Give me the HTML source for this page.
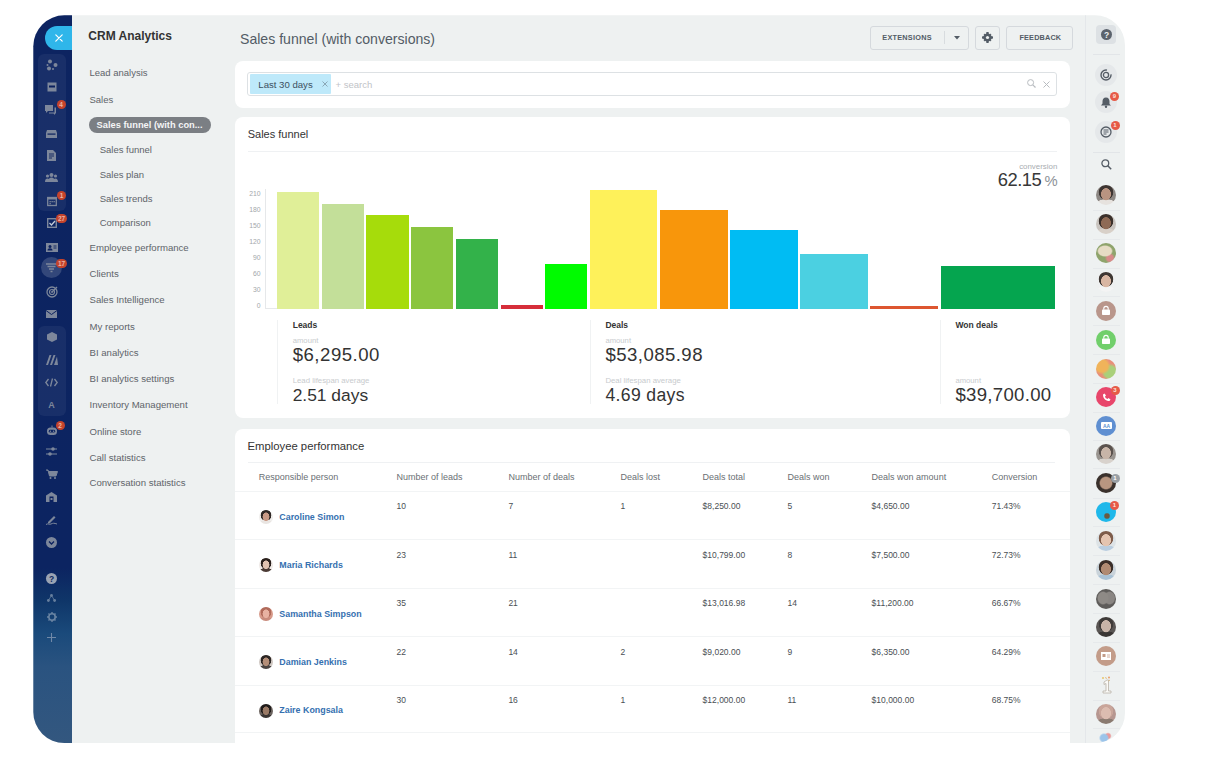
<!DOCTYPE html>
<html><head><meta charset="utf-8"><style>
*{box-sizing:border-box;margin:0;padding:0}
html,body{width:1216px;height:780px;overflow:hidden;background:#fff;font-family:"Liberation Sans",sans-serif;color:#333}
.abs{position:absolute}
.t{position:absolute;white-space:nowrap;line-height:1}
#frame{position:absolute;left:0;top:0;width:1216px;height:780px;clip-path:inset(15.3px 91px 37px 33.3px round 31px 30px 30px 31px);background:#eef1f1}
svg{position:absolute;overflow:visible}
</style></head><body>
<div id="frame">
<div class="abs" style="left:33px;top:15px;width:39.00px;height:728.00px;background:linear-gradient(180deg,#0d2461 0%,#0c2461 76%,#0f3669 80.5%,#1a4a7b 85%,#2a5380 89.5%,#33577f 100%)"></div>
<div class="abs" style="left:45px;top:25.5px;width:27.00px;height:24.20px;background:#2fb6ea;border-radius:12px 0 0 12px"></div>
<svg style="left:54.5px;top:34px" width="8" height="8" viewBox="0 0 8 8"><path d="M0.8 0.8L7.2 7.2M7.2 0.8L0.8 7.2" stroke="#fff" stroke-width="1.2" stroke-linecap="round"/></svg>
<div class="abs" style="left:37.5px;top:54px;width:28.50px;height:157.00px;background:rgba(255,255,255,0.05);border-radius:6px"></div>
<div class="abs" style="left:37.5px;top:326px;width:28.50px;height:90.00px;background:rgba(255,255,255,0.05);border-radius:6px"></div>
<div class="abs" style="left:41px;top:257px;width:21px;height:21px;border-radius:50%;background:rgba(255,255,255,0.16)"></div>
<svg style="left:45.5px;top:59.4px" width="12" height="12" viewBox="0 0 12 12"><g fill="#7d879b"><circle cx="4" cy="2.5" r="2"/><circle cx="9.5" cy="6" r="2"/><circle cx="3" cy="9.5" r="2"/><circle cx="7" cy="10" r="1"/><circle cx="1.5" cy="6" r="1"/></g></svg>
<svg style="left:46.5px;top:82.3px" width="10" height="10" viewBox="0 0 10 10"><rect x="0.5" y="0.5" width="9" height="9" fill="#7d879b"/><rect x="2" y="3.5" width="6" height="2" fill="#0b215f"/></svg>
<svg style="left:45.0px;top:104.2px" width="12" height="11" viewBox="0 0 12 11"><path d="M0 1h8v6H3l-2 2V7H0z" fill="#7d879b"/><path d="M9.5 3.5H11v6H10v1.5L8.5 9.5H4V8.5h5.5z" fill="#7d879b"/></svg>
<svg style="left:46.0px;top:129.5px" width="11" height="8" viewBox="0 0 11 8"><path d="M1 0h9l1 3v5H0V3z" fill="#7d879b"/><rect x="1.5" y="3.5" width="8" height="1.2" fill="#0b215f"/></svg>
<svg style="left:47.0px;top:149.9px" width="9" height="11" viewBox="0 0 9 11"><path d="M0 0h6l3 3v8H0z" fill="#7d879b"/><path d="M2 4h5M2 6h5M2 8h3" stroke="#0b215f" stroke-width="0.9"/></svg>
<svg style="left:45.0px;top:172.8px" width="13" height="9" viewBox="0 0 13 9"><g fill="#7d879b"><circle cx="6.5" cy="2" r="2"/><circle cx="2.5" cy="3" r="1.6"/><circle cx="10.5" cy="3" r="1.6"/><path d="M3 9c0-3 1.5-4.5 3.5-4.5S10 6 10 9z"/><path d="M0 9c0-2.5 1-3.5 2.5-3.5S5 7 5 9zM8 9c0-2 1-3.5 2.5-3.5S13 7 13 9z"/></g></svg>
<svg style="left:46.5px;top:195.8px" width="10" height="10" viewBox="0 0 10 10"><rect x="0.7" y="1.5" width="8.6" height="8" fill="none" stroke="#7d879b" stroke-width="1.3"/><rect x="0.5" y="1" width="9" height="2.5" fill="#7d879b"/><g fill="#7d879b"><rect x="2.5" y="5" width="1.3" height="1.3"/><rect x="4.5" y="5" width="1.3" height="1.3"/><rect x="6.5" y="5" width="1.3" height="1.3"/><rect x="2.5" y="7" width="1.3" height="1.3"/></g></svg>
<svg style="left:46.5px;top:217.7px" width="10" height="10" viewBox="0 0 10 10"><rect x="0.7" y="0.7" width="8.6" height="8.6" fill="none" stroke="#7d879b" stroke-width="1.4"/><path d="M2.5 5l2 2 3.5-4" fill="none" stroke="#c3cbd8" stroke-width="1.3"/></svg>
<svg style="left:45.5px;top:242.5px" width="12" height="9" viewBox="0 0 12 9"><rect x="0" y="0" width="12" height="9" fill="#7d879b"/><circle cx="4" cy="3.5" r="1.5" fill="#0b215f"/><path d="M1.5 7.5c0-1.5 1-2.2 2.5-2.2s2.5.7 2.5 2.2z" fill="#0b215f"/><path d="M7.5 3h3M7.5 5h3" stroke="#0b215f" stroke-width="0.9"/></svg>
<svg style="left:46.0px;top:263.0px" width="11" height="10" viewBox="0 0 11 10"><path d="M0 1h11M1.5 3.5h8M3 6h5M4.5 8.5h2" stroke="#7d879b" stroke-width="1.5"/></svg>
<svg style="left:45.5px;top:286.0px" width="12" height="12" viewBox="0 0 12 12"><circle cx="6" cy="6" r="5" fill="none" stroke="#7d879b" stroke-width="1.3"/><circle cx="6" cy="6" r="2.5" fill="none" stroke="#7d879b" stroke-width="1.2"/><circle cx="6" cy="6" r="0.9" fill="#7d879b"/><path d="M6 6L11 1" stroke="#7d879b" stroke-width="1.2"/></svg>
<svg style="left:46.0px;top:309.9px" width="11" height="8" viewBox="0 0 11 8"><path d="M0 0h11v8H0z" fill="#7d879b"/><path d="M0 0.5L5.5 4.5 11 0.5" fill="none" stroke="#0b215f" stroke-width="1"/></svg>
<svg style="left:46.5px;top:332.0px" width="10" height="10" viewBox="0 0 10 10"><path d="M5 0l5 2.5v5L5 10 0 7.5v-5z" fill="#7d879b"/></svg>
<svg style="left:45.5px;top:355.4px" width="12" height="10" viewBox="0 0 12 10"><path d="M0 10L3.5 0h2L2 10zM4 10L7.5 0h2L6 10zM8 10l3-8.5L12 10z" fill="#7d879b"/></svg>
<svg style="left:45.0px;top:377.8px" width="13" height="9" viewBox="0 0 13 9"><path d="M3.5 1L0.8 4.5 3.5 8M9.5 1l2.7 3.5L9.5 8M7.5 0.5L5.5 8.5" fill="none" stroke="#7d879b" stroke-width="1.3"/></svg>
<div class="t" style="left:48.30px;top:401.38px;font-size:9px;color:#7d879b;font-weight:bold;">A</div>
<svg style="left:45.5px;top:424.6px" width="12" height="10" viewBox="0 0 12 10"><rect x="1" y="2.5" width="10" height="7.5" rx="3.5" fill="#7d879b"/><rect x="2.8" y="4.8" width="6.4" height="2.8" rx="1.4" fill="#0c2461"/><circle cx="4.4" cy="6.2" r="0.7" fill="#7d879b"/><circle cx="7.6" cy="6.2" r="0.7" fill="#7d879b"/><path d="M6 0.5v2" stroke="#7d879b" stroke-width="1"/></svg>
<svg style="left:46.0px;top:447.0px" width="11" height="9" viewBox="0 0 11 9"><path d="M0 2h11M0 7h11" stroke="#7d879b" stroke-width="1.2"/><circle cx="7" cy="2" r="1.8" fill="#7d879b"/><circle cx="4" cy="7" r="1.8" fill="#7d879b"/></svg>
<svg style="left:45.5px;top:468.5px" width="12" height="10" viewBox="0 0 12 10"><path d="M0 1h2l1.5 6h6.5l1.5-4.5H3" fill="#7d879b" stroke="#7d879b" stroke-width="1"/><circle cx="4.5" cy="9" r="1" fill="#7d879b"/><circle cx="9" cy="9" r="1" fill="#7d879b"/></svg>
<svg style="left:46.0px;top:492.0px" width="11" height="10" viewBox="0 0 11 10"><path d="M0 3.5L5.5 0 11 3.5V10H0z" fill="#7d879b"/><rect x="3.5" y="4.5" width="4" height="5.5" fill="#0b215f"/><rect x="4.5" y="6" width="2" height="2" fill="#7d879b"/></svg>
<svg style="left:45.5px;top:515.4px" width="12" height="10" viewBox="0 0 12 10"><path d="M2 7L8 1l1.5 1.5-6 6H2z" fill="#7d879b"/><path d="M0 9.5c2-1.5 3 .5 5-.5s3-1 6 0" fill="none" stroke="#7d879b" stroke-width="1"/></svg>
<svg style="left:46.0px;top:536.8px" width="11" height="11" viewBox="0 0 11 11"><circle cx="5.5" cy="5.5" r="5.5" fill="#7d879b"/><path d="M3 4.5l2.5 2.5L8 4.5" fill="none" stroke="#0b215f" stroke-width="1.3"/></svg>
<svg style="left:46.0px;top:572.5px" width="11" height="11" viewBox="0 0 11 11"><circle cx="5.5" cy="5.5" r="5.5" fill="#9aa3b3"/><text x="5.5" y="8.6" font-size="8.5" font-weight="bold" text-anchor="middle" fill="#0d2a5e" font-family="Liberation Sans">?</text></svg>
<svg style="left:47.0px;top:593.7px" width="9" height="8" viewBox="0 0 9 8"><g fill="#667f9e"><circle cx="4.5" cy="1.5" r="1.4"/><circle cx="1.4" cy="6.5" r="1.4"/><circle cx="7.6" cy="6.5" r="1.4"/></g><path d="M4.5 1.5L1.4 6.5M4.5 1.5L7.6 6.5" stroke="#667f9e" stroke-width="0.8"/></svg>
<svg style="left:46.5px;top:612.3px" width="10" height="10" viewBox="0 0 10 10"><circle cx="5" cy="5" r="3.2" fill="none" stroke="#6a84a3" stroke-width="1.6"/><path d="M5 0v2M5 8v2M0 5h2M8 5h2M1.5 1.5l1.4 1.4M7.1 7.1l1.4 1.4M1.5 8.5l1.4-1.4M7.1 2.9l1.4-1.4" stroke="#6a84a3" stroke-width="1.4"/></svg>
<svg style="left:47.0px;top:632.5px" width="9" height="9" viewBox="0 0 9 9"><path d="M4.5 0v9M0 4.5h9" stroke="#7089a8" stroke-width="1.1"/></svg>
<div class="abs" style="left:56.5px;top:100.1px;width:9px;height:9px;border-radius:4.5px;background:#c4432c;color:#eab5a5;font-size:6.5px;line-height:9px;text-align:center;font-weight:bold">4</div>
<div class="abs" style="left:57.0px;top:191.3px;width:9px;height:9px;border-radius:4.5px;background:#c4432c;color:#eab5a5;font-size:6.5px;line-height:9px;text-align:center;font-weight:bold">1</div>
<div class="abs" style="left:56.0px;top:213.5px;width:11px;height:9px;border-radius:4.5px;background:#c4432c;color:#eab5a5;font-size:6.5px;line-height:9px;text-align:center;font-weight:bold">27</div>
<div class="abs" style="left:56.0px;top:259.0px;width:11px;height:9px;border-radius:4.5px;background:#c4432c;color:#eab5a5;font-size:6.5px;line-height:9px;text-align:center;font-weight:bold">17</div>
<div class="abs" style="left:55.5px;top:420.5px;width:9px;height:9px;border-radius:4.5px;background:#c4432c;color:#eab5a5;font-size:6.5px;line-height:9px;text-align:center;font-weight:bold">2</div>
<div class="t" style="left:88.30px;top:30.34px;font-size:12px;color:#333;font-weight:bold;">CRM Analytics</div>
<div class="t" style="left:89.50px;top:68.16px;font-size:9.5px;color:#5e646a;font-weight:normal;">Lead analysis</div>
<div class="t" style="left:89.50px;top:94.76px;font-size:9.5px;color:#5e646a;font-weight:normal;">Sales</div>
<div class="abs" style="left:89px;top:117.4px;width:121.50px;height:15.70px;background:#7b7f84;border-radius:8px"></div>
<div class="t" style="left:96.60px;top:120.93px;font-size:9.3px;color:#f4f5f6;font-weight:bold;">Sales funnel (with con...</div>
<div class="t" style="left:99.70px;top:145.06px;font-size:9.5px;color:#5e646a;font-weight:normal;">Sales funnel</div>
<div class="t" style="left:99.70px;top:169.66px;font-size:9.5px;color:#5e646a;font-weight:normal;">Sales plan</div>
<div class="t" style="left:99.70px;top:193.96px;font-size:9.5px;color:#5e646a;font-weight:normal;">Sales trends</div>
<div class="t" style="left:99.70px;top:218.46px;font-size:9.5px;color:#5e646a;font-weight:normal;">Comparison</div>
<div class="t" style="left:89.50px;top:242.67px;font-size:9.6px;color:#5e646a;font-weight:normal;">Employee performance</div>
<div class="t" style="left:89.50px;top:268.97px;font-size:9.6px;color:#5e646a;font-weight:normal;">Clients</div>
<div class="t" style="left:89.50px;top:295.27px;font-size:9.6px;color:#5e646a;font-weight:normal;">Sales Intelligence</div>
<div class="t" style="left:89.50px;top:321.57px;font-size:9.6px;color:#5e646a;font-weight:normal;">My reports</div>
<div class="t" style="left:89.50px;top:347.87px;font-size:9.6px;color:#5e646a;font-weight:normal;">BI analytics</div>
<div class="t" style="left:89.50px;top:374.17px;font-size:9.6px;color:#5e646a;font-weight:normal;">BI analytics settings</div>
<div class="t" style="left:89.50px;top:400.47px;font-size:9.6px;color:#5e646a;font-weight:normal;">Inventory Management</div>
<div class="t" style="left:89.50px;top:426.77px;font-size:9.6px;color:#5e646a;font-weight:normal;">Online store</div>
<div class="t" style="left:89.50px;top:453.07px;font-size:9.6px;color:#5e646a;font-weight:normal;">Call statistics</div>
<div class="t" style="left:89.50px;top:477.87px;font-size:9.6px;color:#5e646a;font-weight:normal;">Conversation statistics</div>
<div class="t" style="left:240.00px;top:32.06px;font-size:14.1px;color:#535c66;font-weight:normal;">Sales funnel (with conversions)</div>
<div class="abs" style="left:869.5px;top:25.8px;width:99.30px;height:23.80px;border:1px solid #d5d9dd;border-radius:3px;background:#eef1f1"></div>
<div class="abs" style="left:944.3px;top:31px;width:1.00px;height:13.00px;background:#d8dcdf"></div>
<div class="t" style="left:882.30px;top:34.42px;font-size:7.3px;color:#535c66;font-weight:bold;letter-spacing:0.25px">EXTENSIONS</div>
<svg style="left:953.5px;top:35.5px" width="6" height="4" viewBox="0 0 6 4"><path d="M0 0h6L3 3.5z" fill="#535c66"/></svg>
<div class="abs" style="left:975.4px;top:25.8px;width:24.20px;height:23.80px;border:1px solid #d5d9dd;border-radius:3px;background:#eef1f1"></div>
<svg style="left:982.0px;top:32.2px" width="11" height="11" viewBox="0 0 11 11"><g fill="#535c66"><circle cx="5.5" cy="5.5" r="3.8"/><path d="M4.4 0h2.2l.3 2h-2.8zM4.4 11h2.2l.3-2h-2.8zM0 4.4v2.2l2 .3V4.1zM11 4.4v2.2l-2 .3V4.1z"/><path d="M1.4 2.9L2.9 1.4 4.3 2.9 2.9 4.3zM9.6 8.1L8.1 9.6 6.7 8.1 8.1 6.7zM8.1 1.4L9.6 2.9 8.1 4.3 6.7 2.9zM2.9 9.6L1.4 8.1 2.9 6.7 4.3 8.1z"/></g><circle cx="5.5" cy="5.5" r="1.6" fill="#eef1f1"/></svg>
<div class="abs" style="left:1006.2px;top:25.8px;width:66.60px;height:23.80px;border:1px solid #d5d9dd;border-radius:3px;background:#eef1f1"></div>
<div class="t" style="left:1019.50px;top:34.42px;font-size:7.3px;color:#535c66;font-weight:bold;letter-spacing:0.15px">FEEDBACK</div>
<div class="abs" style="left:234.7px;top:60.7px;width:834.90px;height:47.30px;background:#fff;border-radius:8px"></div>
<div class="abs" style="left:246.8px;top:72.2px;width:810.70px;height:24.10px;border:1px solid #dde1e4;border-radius:3px;background:#fff"></div>
<div class="abs" style="left:249.9px;top:74.4px;width:81.60px;height:19.50px;background:#bee9fa;border-radius:1px"></div>
<div class="t" style="left:258.30px;top:79.57px;font-size:9.6px;color:#3d5061;font-weight:normal;">Last 30 days</div>
<svg style="left:322.1px;top:81.0px" width="6" height="6" viewBox="0 0 6 6"><path d="M0.5 0.5l5 5M5.5 0.5l-5 5" stroke="#8aa7b6" stroke-width="1"/></svg>
<div class="t" style="left:335.60px;top:79.66px;font-size:9.5px;color:#bfc3c7;font-weight:normal;">+ search</div>
<svg style="left:1027.0px;top:79.0px" width="9" height="9" viewBox="0 0 9 9"><circle cx="3.6" cy="3.6" r="3" fill="none" stroke="#b8bcc0" stroke-width="1"/><path d="M5.8 5.8L8.5 8.5" stroke="#b8bcc0" stroke-width="1.2"/></svg>
<svg style="left:1043.0px;top:80.5px" width="7" height="7" viewBox="0 0 7 7"><path d="M0.5 0.5l6 6M6.5 0.5l-6 6" stroke="#b8bcc0" stroke-width="1"/></svg>
<div class="abs" style="left:234.7px;top:117px;width:834.90px;height:300.50px;background:#fff;border-radius:8px"></div>
<div class="t" style="left:247.70px;top:129.49px;font-size:11px;color:#333;font-weight:normal;">Sales funnel</div>
<div class="abs" style="left:248px;top:151px;width:809.00px;height:1.00px;background:#eff1f3"></div>
<div class="t" style="right:158.70px;top:162.91px;font-size:7.9px;color:#a9adb1;font-weight:normal;">conversion</div>
<div class="t" style="right:174.80px;top:171.02px;font-size:18.4px;color:#383838;font-weight:normal;letter-spacing:-0.5px">62.15</div>
<div class="t" style="right:158.40px;top:174.07px;font-size:14.8px;color:#8d9297;font-weight:normal;">%</div>
<div class="t" style="right:955.50px;top:191.04px;font-size:6.8px;color:#a3a7ab;font-weight:normal;">210</div>
<div class="t" style="right:955.50px;top:207.04px;font-size:6.8px;color:#a3a7ab;font-weight:normal;">180</div>
<div class="t" style="right:955.50px;top:223.04px;font-size:6.8px;color:#a3a7ab;font-weight:normal;">150</div>
<div class="t" style="right:955.50px;top:239.04px;font-size:6.8px;color:#a3a7ab;font-weight:normal;">120</div>
<div class="t" style="right:955.50px;top:255.04px;font-size:6.8px;color:#a3a7ab;font-weight:normal;">90</div>
<div class="t" style="right:955.50px;top:271.04px;font-size:6.8px;color:#a3a7ab;font-weight:normal;">60</div>
<div class="t" style="right:955.50px;top:287.04px;font-size:6.8px;color:#a3a7ab;font-weight:normal;">30</div>
<div class="t" style="right:955.50px;top:303.04px;font-size:6.8px;color:#a3a7ab;font-weight:normal;">0</div>
<div class="abs" style="left:265.3px;top:188.7px;width:1.00px;height:120.30px;background:#e6e8ea"></div>
<div class="abs" style="left:265.3px;top:308.2px;width:11.70px;height:0.80px;background:#e6e8ea"></div>
<div class="abs" style="left:277px;top:191.5px;width:42.40px;height:117.20px;background:#e0ef98"></div>
<div class="abs" style="left:322.3px;top:204px;width:41.70px;height:104.70px;background:#c3df99"></div>
<div class="abs" style="left:366.4px;top:215px;width:42.20px;height:93.70px;background:#a6dc0b"></div>
<div class="abs" style="left:411.4px;top:227px;width:41.80px;height:81.70px;background:#8bc53f"></div>
<div class="abs" style="left:456.2px;top:238.8px;width:41.80px;height:69.90px;background:#33b24a"></div>
<div class="abs" style="left:500.8px;top:305px;width:41.80px;height:3.70px;background:#d62e3a"></div>
<div class="abs" style="left:545.2px;top:263.7px;width:42.20px;height:45.00px;background:#00fb00"></div>
<div class="abs" style="left:590.4px;top:189.9px;width:67.10px;height:118.80px;background:#fef15a"></div>
<div class="abs" style="left:660.3px;top:209.6px;width:67.30px;height:99.10px;background:#f8960b"></div>
<div class="abs" style="left:729.9px;top:230.3px;width:67.70px;height:78.40px;background:#00bcf3"></div>
<div class="abs" style="left:800.4px;top:254.4px;width:67.30px;height:54.30px;background:#4bd0e1"></div>
<div class="abs" style="left:870.2px;top:305.9px;width:67.60px;height:2.80px;background:#dd5630"></div>
<div class="abs" style="left:940.7px;top:266.2px;width:114.50px;height:42.50px;background:#05a54f"></div>
<div class="abs" style="left:277.4px;top:320px;width:1.00px;height:84.00px;background:#f0f2f3"></div>
<div class="abs" style="left:590.2px;top:320px;width:1.00px;height:84.00px;background:#f0f2f3"></div>
<div class="abs" style="left:940px;top:320px;width:1.00px;height:84.00px;background:#f0f2f3"></div>
<div class="t" style="left:292.70px;top:321.10px;font-size:8.5px;color:#333;font-weight:bold;">Leads</div>
<div class="t" style="left:292.70px;top:336.88px;font-size:7.7px;color:#c8cbce;font-weight:normal;">amount</div>
<div class="t" style="left:292.70px;top:345.76px;font-size:18.6px;color:#333;font-weight:normal;letter-spacing:0.5px">$6,295.00</div>
<div class="t" style="left:292.70px;top:377.00px;font-size:7.8px;color:#c8cbce;font-weight:normal;">Lead lifespan average</div>
<div class="t" style="left:292.70px;top:387.07px;font-size:17.4px;color:#333;font-weight:normal;">2.51 days</div>
<div class="t" style="left:605.40px;top:321.00px;font-size:8.5px;color:#333;font-weight:bold;">Deals</div>
<div class="t" style="left:605.40px;top:336.88px;font-size:7.7px;color:#c8cbce;font-weight:normal;">amount</div>
<div class="t" style="left:605.40px;top:345.86px;font-size:18.6px;color:#333;font-weight:normal;letter-spacing:0.45px">$53,085.98</div>
<div class="t" style="left:605.40px;top:377.20px;font-size:7.8px;color:#c8cbce;font-weight:normal;">Deal lifespan average</div>
<div class="t" style="left:605.40px;top:387.10px;font-size:17.6px;color:#333;font-weight:normal;letter-spacing:0.35px">4.69 days</div>
<div class="t" style="left:955.40px;top:321.40px;font-size:8.5px;color:#333;font-weight:bold;">Won deals</div>
<div class="t" style="left:955.40px;top:376.98px;font-size:7.7px;color:#c8cbce;font-weight:normal;">amount</div>
<div class="t" style="left:955.40px;top:385.86px;font-size:18.6px;color:#333;font-weight:normal;letter-spacing:0.3px">$39,700.00</div>
<div class="abs" style="left:234.7px;top:429px;width:834.90px;height:331.00px;background:#fff;border-radius:8px"></div>
<div class="t" style="left:247.50px;top:441.03px;font-size:11.3px;color:#333;font-weight:normal;">Employee performance</div>
<div class="abs" style="left:247.5px;top:462px;width:807.50px;height:1.00px;background:#eff1f3"></div>
<div class="t" style="left:258.80px;top:472.78px;font-size:9px;color:#6a6f74;font-weight:normal;">Responsible person</div>
<div class="t" style="left:396.50px;top:472.78px;font-size:9px;color:#6a6f74;font-weight:normal;">Number of leads</div>
<div class="t" style="left:508.40px;top:472.78px;font-size:9px;color:#6a6f74;font-weight:normal;">Number of deals</div>
<div class="t" style="left:620.50px;top:472.78px;font-size:9px;color:#6a6f74;font-weight:normal;">Deals lost</div>
<div class="t" style="left:702.60px;top:472.78px;font-size:9px;color:#6a6f74;font-weight:normal;">Deals total</div>
<div class="t" style="left:787.50px;top:472.78px;font-size:9px;color:#6a6f74;font-weight:normal;">Deals won</div>
<div class="t" style="left:871.60px;top:472.78px;font-size:9px;color:#6a6f74;font-weight:normal;">Deals won amount</div>
<div class="t" style="left:991.80px;top:472.78px;font-size:9px;color:#6a6f74;font-weight:normal;">Conversion</div>
<div class="abs" style="left:235px;top:491.3px;width:834.60px;height:1.00px;background:#f2f4f5"></div>
<div class="abs" style="left:235px;top:539.3px;width:834.60px;height:1.00px;background:#f2f4f5"></div>
<div class="abs" style="left:235px;top:587.7px;width:834.60px;height:1.00px;background:#f2f4f5"></div>
<div class="abs" style="left:235px;top:636px;width:834.60px;height:1.00px;background:#f2f4f5"></div>
<div class="abs" style="left:235px;top:684.5px;width:834.60px;height:1.00px;background:#f2f4f5"></div>
<div class="abs" style="left:235px;top:732px;width:834.60px;height:1.00px;background:#f2f4f5"></div>
<div class="abs" style="left:259.4px;top:510.0px;width:14px;height:14px;border-radius:50%;background:radial-gradient(ellipse 26% 32% at 50% 48%,#c99a86 0 90%,transparent 100%),radial-gradient(ellipse 55% 30% at 50% 100%,#e9e5e2 0 90%,transparent 100%),radial-gradient(ellipse 40% 42% at 50% 38%,#2f2826 0 90%,transparent 100%),#f0eeec"></div>
<div class="t" style="left:279.30px;top:512.77px;font-size:8.9px;color:#3570b0;font-weight:bold;">Caroline Simon</div>
<div class="t" style="left:396.50px;top:502.40px;font-size:8.5px;color:#4a4f54;font-weight:normal;">10</div>
<div class="t" style="left:508.40px;top:502.40px;font-size:8.5px;color:#4a4f54;font-weight:normal;">7</div>
<div class="t" style="left:620.50px;top:502.40px;font-size:8.5px;color:#4a4f54;font-weight:normal;">1</div>
<div class="t" style="left:702.60px;top:502.40px;font-size:8.5px;color:#4a4f54;font-weight:normal;">$8,250.00</div>
<div class="t" style="left:787.50px;top:502.40px;font-size:8.5px;color:#4a4f54;font-weight:normal;">5</div>
<div class="t" style="left:871.60px;top:502.40px;font-size:8.5px;color:#4a4f54;font-weight:normal;">$4,650.00</div>
<div class="t" style="left:991.80px;top:502.40px;font-size:8.5px;color:#4a4f54;font-weight:normal;">71.43%</div>
<div class="abs" style="left:259.4px;top:558.4px;width:14px;height:14px;border-radius:50%;background:radial-gradient(ellipse 26% 32% at 50% 48%,#e2c2b0 0 90%,transparent 100%),radial-gradient(ellipse 55% 30% at 50% 100%,#4a3a34 0 90%,transparent 100%),radial-gradient(ellipse 40% 42% at 50% 38%,#2a201c 0 90%,transparent 100%),#efe9e6"></div>
<div class="t" style="left:279.30px;top:561.17px;font-size:8.9px;color:#3570b0;font-weight:bold;">Maria Richards</div>
<div class="t" style="left:396.50px;top:550.80px;font-size:8.5px;color:#4a4f54;font-weight:normal;">23</div>
<div class="t" style="left:508.40px;top:550.80px;font-size:8.5px;color:#4a4f54;font-weight:normal;">11</div>
<div class="t" style="left:620.50px;top:550.80px;font-size:8.5px;color:#4a4f54;font-weight:normal;"></div>
<div class="t" style="left:702.60px;top:550.80px;font-size:8.5px;color:#4a4f54;font-weight:normal;">$10,799.00</div>
<div class="t" style="left:787.50px;top:550.80px;font-size:8.5px;color:#4a4f54;font-weight:normal;">8</div>
<div class="t" style="left:871.60px;top:550.80px;font-size:8.5px;color:#4a4f54;font-weight:normal;">$7,500.00</div>
<div class="t" style="left:991.80px;top:550.80px;font-size:8.5px;color:#4a4f54;font-weight:normal;">72.73%</div>
<div class="abs" style="left:259.4px;top:606.8px;width:14px;height:14px;border-radius:50%;background:radial-gradient(ellipse 26% 32% at 50% 48%,#e8b2a2 0 90%,transparent 100%),radial-gradient(ellipse 55% 30% at 50% 100%,#c98b7c 0 90%,transparent 100%),radial-gradient(ellipse 40% 42% at 50% 38%,#b06a5a 0 90%,transparent 100%),#d79a8a"></div>
<div class="t" style="left:279.30px;top:609.57px;font-size:8.9px;color:#3570b0;font-weight:bold;">Samantha Simpson</div>
<div class="t" style="left:396.50px;top:599.20px;font-size:8.5px;color:#4a4f54;font-weight:normal;">35</div>
<div class="t" style="left:508.40px;top:599.20px;font-size:8.5px;color:#4a4f54;font-weight:normal;">21</div>
<div class="t" style="left:620.50px;top:599.20px;font-size:8.5px;color:#4a4f54;font-weight:normal;"></div>
<div class="t" style="left:702.60px;top:599.20px;font-size:8.5px;color:#4a4f54;font-weight:normal;">$13,016.98</div>
<div class="t" style="left:787.50px;top:599.20px;font-size:8.5px;color:#4a4f54;font-weight:normal;">14</div>
<div class="t" style="left:871.60px;top:599.20px;font-size:8.5px;color:#4a4f54;font-weight:normal;">$11,200.00</div>
<div class="t" style="left:991.80px;top:599.20px;font-size:8.5px;color:#4a4f54;font-weight:normal;">66.67%</div>
<div class="abs" style="left:259.4px;top:655.2px;width:14px;height:14px;border-radius:50%;background:radial-gradient(ellipse 26% 32% at 50% 48%,#b48e78 0 90%,transparent 100%),radial-gradient(ellipse 55% 30% at 50% 100%,#4a4442 0 90%,transparent 100%),radial-gradient(ellipse 40% 42% at 50% 38%,#2c2624 0 90%,transparent 100%),#cfc7c2"></div>
<div class="t" style="left:279.30px;top:657.97px;font-size:8.9px;color:#3570b0;font-weight:bold;">Damian Jenkins</div>
<div class="t" style="left:396.50px;top:647.60px;font-size:8.5px;color:#4a4f54;font-weight:normal;">22</div>
<div class="t" style="left:508.40px;top:647.60px;font-size:8.5px;color:#4a4f54;font-weight:normal;">14</div>
<div class="t" style="left:620.50px;top:647.60px;font-size:8.5px;color:#4a4f54;font-weight:normal;">2</div>
<div class="t" style="left:702.60px;top:647.60px;font-size:8.5px;color:#4a4f54;font-weight:normal;">$9,020.00</div>
<div class="t" style="left:787.50px;top:647.60px;font-size:8.5px;color:#4a4f54;font-weight:normal;">9</div>
<div class="t" style="left:871.60px;top:647.60px;font-size:8.5px;color:#4a4f54;font-weight:normal;">$6,350.00</div>
<div class="t" style="left:991.80px;top:647.60px;font-size:8.5px;color:#4a4f54;font-weight:normal;">64.29%</div>
<div class="abs" style="left:259.4px;top:703.6px;width:14px;height:14px;border-radius:50%;background:radial-gradient(ellipse 26% 32% at 50% 48%,#9a7a66 0 90%,transparent 100%),radial-gradient(ellipse 55% 30% at 50% 100%,#3a3432 0 90%,transparent 100%),radial-gradient(ellipse 40% 42% at 50% 38%,#1f1b1a 0 90%,transparent 100%),#6a625e"></div>
<div class="t" style="left:279.30px;top:706.37px;font-size:8.9px;color:#3570b0;font-weight:bold;">Zaire Kongsala</div>
<div class="t" style="left:396.50px;top:696.00px;font-size:8.5px;color:#4a4f54;font-weight:normal;">30</div>
<div class="t" style="left:508.40px;top:696.00px;font-size:8.5px;color:#4a4f54;font-weight:normal;">16</div>
<div class="t" style="left:620.50px;top:696.00px;font-size:8.5px;color:#4a4f54;font-weight:normal;">1</div>
<div class="t" style="left:702.60px;top:696.00px;font-size:8.5px;color:#4a4f54;font-weight:normal;">$12,000.00</div>
<div class="t" style="left:787.50px;top:696.00px;font-size:8.5px;color:#4a4f54;font-weight:normal;">11</div>
<div class="t" style="left:871.60px;top:696.00px;font-size:8.5px;color:#4a4f54;font-weight:normal;">$10,000.00</div>
<div class="t" style="left:991.80px;top:696.00px;font-size:8.5px;color:#4a4f54;font-weight:normal;">68.75%</div>
<div class="abs" style="left:1085px;top:15px;width:1.00px;height:728.00px;background:#e4e7ea"></div>
<div class="abs" style="left:1096px;top:24.6px;width:20.00px;height:19.80px;background:#dde1e4;border-radius:4px"></div>
<svg style="left:1100.5px;top:29.0px" width="11" height="11" viewBox="0 0 11 11"><circle cx="5.5" cy="5.5" r="5.5" fill="#5b636d"/><text x="5.5" y="8.7" font-size="8.5" font-weight="bold" text-anchor="middle" fill="#eef1f1" font-family="Liberation Sans">?</text></svg>
<div class="abs" style="left:1093px;top:54px;width:27.00px;height:1.00px;background:#e2e5e8"></div>
<div class="abs" style="left:1095px;top:63.6px;width:22px;height:22px;border-radius:50%;background:#e5e8ea"></div>
<div class="abs" style="left:1095px;top:91.3px;width:22px;height:22px;border-radius:50%;background:#e5e8ea"></div>
<div class="abs" style="left:1095px;top:120.8px;width:22px;height:22px;border-radius:50%;background:#e5e8ea"></div>
<svg style="left:1100.0px;top:68.6px" width="12" height="12" viewBox="0 0 12 12"><circle cx="6" cy="6" r="5" fill="none" stroke="#555d66" stroke-width="1.4" stroke-dasharray="24 6"/><circle cx="6" cy="6" r="2.6" fill="none" stroke="#555d66" stroke-width="1.3"/></svg>
<svg style="left:1101.0px;top:96.8px" width="10" height="11" viewBox="0 0 10 11"><path d="M5 0.5c2.5 0 3.5 2 3.5 4v2.5L10 8.5H0l1.5-2V4.5c0-2 1-4 3.5-4z" fill="#555d66"/><circle cx="5" cy="9.8" r="1.2" fill="#555d66"/></svg>
<svg style="left:1100.0px;top:125.8px" width="12" height="12" viewBox="0 0 12 12"><circle cx="6" cy="6" r="5" fill="none" stroke="#555d66" stroke-width="1.3"/><path d="M3.5 4h5M3.5 6h5M3.5 8h3" stroke="#555d66" stroke-width="1"/></svg>
<div class="abs" style="left:1110.0px;top:92.0px;width:9px;height:9px;border-radius:50%;background:#e65a47;color:#fbe3dd;font-size:6px;line-height:9px;text-align:center;font-weight:bold">9</div>
<div class="abs" style="left:1110.5px;top:121.0px;width:9px;height:9px;border-radius:50%;background:#e65a47;color:#fbe3dd;font-size:6px;line-height:9px;text-align:center;font-weight:bold">1</div>
<div class="abs" style="left:1093px;top:151.5px;width:27.00px;height:1.00px;background:#e2e5e8"></div>
<svg style="left:1101.0px;top:158.5px" width="11" height="11" viewBox="0 0 11 11"><circle cx="4.3" cy="4.3" r="3.4" fill="none" stroke="#555d66" stroke-width="1.3"/><path d="M6.8 6.8L10.2 10.2" stroke="#555d66" stroke-width="1.5"/></svg>
<div class="abs" style="left:1096px;top:185.4px;width:20px;height:20px;border-radius:50%;background:radial-gradient(ellipse 26% 32% at 50% 46%,#b99481 0 90%,transparent 100%),radial-gradient(ellipse 55% 30% at 50% 100%,#e6e2de 0 90%,transparent 100%),radial-gradient(ellipse 38% 40% at 50% 36%,#3d3532 0 90%,transparent 100%),#8d8884"></div>
<div class="abs" style="left:1096px;top:214.0px;width:20px;height:20px;border-radius:50%;background:radial-gradient(ellipse 26% 32% at 50% 46%,#8e6a55 0 90%,transparent 100%),radial-gradient(ellipse 55% 30% at 50% 100%,#d8d0c8 0 90%,transparent 100%),radial-gradient(ellipse 38% 40% at 50% 36%,#3a302b 0 90%,transparent 100%),#c9c4bf"></div>
<div class="abs" style="left:1096px;top:243.0px;width:20px;height:20px;border-radius:50%;background:radial-gradient(ellipse 40% 30% at 45% 40%,#e6dcc4 0 80%,transparent 100%),radial-gradient(circle at 70% 75%,#d88a8a 0 15%,transparent 25%),#8fa46c"></div>
<div class="abs" style="left:1096px;top:272.0px;width:20px;height:20px;border-radius:50%;background:radial-gradient(ellipse 26% 32% at 50% 46%,#d9b6a2 0 90%,transparent 100%),radial-gradient(ellipse 55% 30% at 50% 100%,#f4f4f4 0 90%,transparent 100%),radial-gradient(ellipse 38% 40% at 50% 36%,#3f3733 0 90%,transparent 100%),#eef0f0"></div>
<div class="abs" style="left:1096px;top:300.8px;width:20px;height:20px;border-radius:50%;background:#b9968b"></div>
<div class="abs" style="left:1096px;top:329.6px;width:20px;height:20px;border-radius:50%;background:#71cf6b"></div>
<div class="abs" style="left:1096px;top:358.5px;width:20px;height:20px;border-radius:50%;background:radial-gradient(circle at 30% 35%,#f0b35a 0 30%,transparent 45%),radial-gradient(circle at 70% 65%,#a9d07a 0 30%,transparent 45%),#e88f7a"></div>
<div class="abs" style="left:1096px;top:387.3px;width:20px;height:20px;border-radius:50%;background:#e8466b"></div>
<div class="abs" style="left:1096px;top:416.0px;width:20px;height:20px;border-radius:50%;background:#5f8fd1"></div>
<div class="abs" style="left:1096px;top:443.8px;width:20px;height:20px;border-radius:50%;background:radial-gradient(ellipse 26% 32% at 50% 46%,#c8b5a8 0 90%,transparent 100%),radial-gradient(ellipse 55% 30% at 50% 100%,#d8d2cc 0 90%,transparent 100%),radial-gradient(ellipse 38% 40% at 50% 36%,#5a524e 0 90%,transparent 100%),#9a9590"></div>
<div class="abs" style="left:1096px;top:473.0px;width:20px;height:20px;border-radius:50%;background:radial-gradient(ellipse 35% 35% at 50% 50%,#b89680 0 80%,transparent 100%),#3a312c"></div>
<div class="abs" style="left:1096px;top:502.0px;width:20px;height:20px;border-radius:50%;background:radial-gradient(circle at 55% 70%,#6a5a40 0 12%,transparent 20%),#1fb8ea"></div>
<div class="abs" style="left:1096px;top:530.8px;width:20px;height:20px;border-radius:50%;background:radial-gradient(ellipse 26% 32% at 50% 46%,#e4c4b0 0 90%,transparent 100%),radial-gradient(ellipse 55% 30% at 50% 100%,#b9cde0 0 90%,transparent 100%),radial-gradient(ellipse 38% 40% at 50% 36%,#7e5c4a 0 90%,transparent 100%),#dde3e6"></div>
<div class="abs" style="left:1096px;top:559.6px;width:20px;height:20px;border-radius:50%;background:radial-gradient(ellipse 26% 32% at 50% 46%,#b08a72 0 90%,transparent 100%),radial-gradient(ellipse 55% 30% at 50% 100%,#a9c2d6 0 90%,transparent 100%),radial-gradient(ellipse 38% 40% at 50% 36%,#3b2e28 0 90%,transparent 100%),#c9d3da"></div>
<div class="abs" style="left:1096px;top:588.5px;width:20px;height:20px;border-radius:50%;background:radial-gradient(ellipse 30% 35% at 35% 45%,#8e8a86 0 80%,transparent 100%),radial-gradient(ellipse 30% 35% at 68% 45%,#8a8683 0 80%,transparent 100%),#5e5c5a"></div>
<div class="abs" style="left:1096px;top:617.3px;width:20px;height:20px;border-radius:50%;background:radial-gradient(ellipse 26% 32% at 50% 46%,#c8b4a8 0 90%,transparent 100%),radial-gradient(ellipse 55% 30% at 50% 100%,#3a3634 0 90%,transparent 100%),radial-gradient(ellipse 38% 40% at 50% 36%,#3f3b39 0 90%,transparent 100%),#5a5654"></div>
<div class="abs" style="left:1096px;top:646.0px;width:20px;height:20px;border-radius:50%;background:#c39c89"></div>
<div class="abs" style="left:1096px;top:675.0px;width:20px;height:20px;border-radius:50%;background:#eef1f1"></div>
<svg style="left:1101.0px;top:676.0px" width="10" height="18" viewBox="0 0 10 18"><path d="M3 6l3-2h1.5v11H10v2H2v-2h3V7.5L3 8.5z" fill="#fbfaf7" stroke="#b9b2a8" stroke-width="0.8"/><circle cx="2" cy="2" r="1" fill="#e9c46a"/><circle cx="8" cy="1.5" r="1" fill="#e9a06a"/><path d="M4.5 1l1 2M9 4l-1.5 1" stroke="#d9b26a" stroke-width="0.8"/></svg>
<div class="abs" style="left:1096px;top:703.8px;width:20px;height:20px;border-radius:50%;background:radial-gradient(ellipse 26% 32% at 50% 46%,#dcbcb0 0 90%,transparent 100%),radial-gradient(ellipse 55% 30% at 50% 100%,#8a7a70 0 90%,transparent 100%),radial-gradient(ellipse 38% 40% at 50% 36%,#c9a59a 0 90%,transparent 100%),#b69690"></div>
<div class="abs" style="left:1096px;top:730.0px;width:20px;height:20px;border-radius:50%;background:radial-gradient(circle at 40% 40%,#9bc4ea 0 20%,transparent 30%),radial-gradient(circle at 60% 30%,#e99a9a 0 12%,transparent 20%),#eef1f1"></div>
<svg style="left:1102.0px;top:306.3px" width="8" height="9" viewBox="0 0 8 9"><rect x="0" y="3.5" width="8" height="5.5" rx="0.8" fill="#fff"/><path d="M1.8 3.8V2.6a2.2 2.2 0 0 1 4.4 0v1.2" fill="none" stroke="#fff" stroke-width="1.1"/></svg>
<svg style="left:1102.0px;top:335.1px" width="8" height="9" viewBox="0 0 8 9"><rect x="0" y="3.5" width="8" height="5.5" rx="0.8" fill="#fff"/><path d="M1.8 3.8V2.6a2.2 2.2 0 0 1 4.4 0v1.2" fill="none" stroke="#fff" stroke-width="1.1"/></svg>
<svg style="left:1101.5px;top:392.8px" width="9" height="9" viewBox="0 0 9 9"><path d="M1 1.5c0 4 2.5 6.5 6.5 6.5L8.5 6.5 6.5 5 5.5 6C4 5.5 3.5 5 3 3.5L4 2.5 2.5 0.5z" fill="#fff"/></svg>
<svg style="left:1100.5px;top:422.0px" width="11" height="8" viewBox="0 0 11 8"><rect x="0" y="0" width="11" height="7" rx="1" fill="#fff"/><text x="5.5" y="5.6" font-size="5" text-anchor="middle" fill="#5a8fd0" font-family="Liberation Sans" font-weight="bold">AA</text></svg>
<svg style="left:1101.0px;top:652.0px" width="10" height="8" viewBox="0 0 10 8"><rect x="0" y="0" width="10" height="8" fill="#fff"/><rect x="1.5" y="2" width="3" height="3" fill="#c29b88"/><path d="M6 3h3M6 5h3" stroke="#c29b88" stroke-width="0.8"/></svg>
<div class="abs" style="left:1110.5px;top:385.5px;width:9px;height:9px;border-radius:50%;background:#e65a47;color:#fbe3dd;font-size:6px;line-height:9px;text-align:center;font-weight:bold">3</div>
<div class="abs" style="left:1110.5px;top:473.5px;width:9px;height:9px;border-radius:50%;background:#9aa0a5;color:#fff;font-size:6px;line-height:9px;text-align:center;font-weight:bold">1</div>
<div class="abs" style="left:1110.0px;top:500.5px;width:9px;height:9px;border-radius:50%;background:#e65a47;color:#fbe3dd;font-size:6px;line-height:9px;text-align:center;font-weight:bold">1</div>
<div class="abs" style="left:1093px;top:209.7px;width:27.00px;height:1.00px;background:#e6e9eb"></div>
<div class="abs" style="left:1093px;top:238.5px;width:27.00px;height:1.00px;background:#e6e9eb"></div>
<div class="abs" style="left:1093px;top:267.5px;width:27.00px;height:1.00px;background:#e6e9eb"></div>
<div class="abs" style="left:1093px;top:296.3px;width:27.00px;height:1.00px;background:#e6e9eb"></div>
<div class="abs" style="left:1093px;top:325.1px;width:27.00px;height:1.00px;background:#e6e9eb"></div>
<div class="abs" style="left:1093px;top:354px;width:27.00px;height:1.00px;background:#e6e9eb"></div>
<div class="abs" style="left:1093px;top:382.8px;width:27.00px;height:1.00px;background:#e6e9eb"></div>
<div class="abs" style="left:1093px;top:411.6px;width:27.00px;height:1.00px;background:#e6e9eb"></div>
<div class="abs" style="left:1093px;top:440px;width:27.00px;height:1.00px;background:#e6e9eb"></div>
<div class="abs" style="left:1093px;top:468.4px;width:27.00px;height:1.00px;background:#e6e9eb"></div>
<div class="abs" style="left:1093px;top:497.5px;width:27.00px;height:1.00px;background:#e6e9eb"></div>
<div class="abs" style="left:1093px;top:526.4px;width:27.00px;height:1.00px;background:#e6e9eb"></div>
<div class="abs" style="left:1093px;top:555.2px;width:27.00px;height:1.00px;background:#e6e9eb"></div>
<div class="abs" style="left:1093px;top:584px;width:27.00px;height:1.00px;background:#e6e9eb"></div>
<div class="abs" style="left:1093px;top:613px;width:27.00px;height:1.00px;background:#e6e9eb"></div>
<div class="abs" style="left:1093px;top:641.7px;width:27.00px;height:1.00px;background:#e6e9eb"></div>
<div class="abs" style="left:1093px;top:670.5px;width:27.00px;height:1.00px;background:#e6e9eb"></div>
<div class="abs" style="left:1093px;top:699.5px;width:27.00px;height:1.00px;background:#e6e9eb"></div>
<div class="abs" style="left:1093px;top:728px;width:27.00px;height:1.00px;background:#e6e9eb"></div>
</div>
</body></html>
